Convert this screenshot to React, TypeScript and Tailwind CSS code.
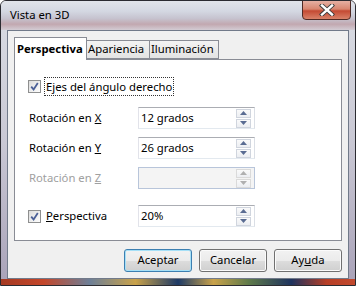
import { ReactNode } from 'react';

const font = { fontFamily: '"Noto Sans", "Open Sans", sans-serif' };

function Checkbox() {
  return (
    <span className="w-[13px] h-[13px] border border-[#8e8f8f] bg-[linear-gradient(135deg,#dcdcdc,#fdfdfd)] flex items-center justify-center shrink-0">
      <svg width="9" height="9" viewBox="0 0 9 9">
        <path d="M1.2 4.6 L3.6 7.4 L7.8 1" fill="none" stroke="#4a5f97" strokeWidth="1.8" />
      </svg>
    </span>
  );
}

function Spin({ value, disabled }: { value?: string; disabled?: boolean }) {
  const arrow = disabled ? '#b0b0b0' : '#5a6c92';
  return (
    <div
      className={`w-[117px] h-[22px] flex items-center border ${
        disabled ? 'border-[#b8c5da] bg-[#f4f4f4]' : 'border-[#abadb3] border-l-[#e2e3ea] border-r-[#dbdfe6] border-b-[#e3e9ef] bg-white'
      }`}
    >
      <span className="flex-1 pl-[2px] text-[11.3px] text-black leading-none">{value}</span>
      <div className="w-[15px] h-[19px] mr-[3px] flex flex-col gap-px">
        {['up', 'down'].map((d) => (
          <div
            key={d}
            className={`flex-1 border ${disabled ? 'border-[#dadada]' : 'border-[#d0d5de]'} bg-[linear-gradient(180deg,#fafafa,#eceef2)] flex items-center justify-center`}
          >
            <svg width="7" height="4" viewBox="0 0 7 4">
              <path d={d === 'up' ? 'M0 4 L3.5 0 L7 4 Z' : 'M0 0 L3.5 4 L7 0 Z'} fill={arrow} />
            </svg>
          </div>
        ))}
      </div>
    </div>
  );
}

function Row({ label, children, mt }: { label: ReactNode; children: ReactNode; mt: string }) {
  return (
    <div className={`flex items-center h-[22px] ${mt}`}>
      <div className="w-[111px] flex items-center">{label}</div>
      <div className="-ml-px">{children}</div>
    </div>
  );
}

function Button({ children, primary }: { children: ReactNode; primary?: boolean }) {
  return (
    <button
      className={`w-[68px] h-[23px] rounded-[3px] border text-[11.3px] text-black ${
        primary
          ? 'border-[#3c7fb1] shadow-[inset_0_0_0_1px_#a6e0f7]'
          : 'border-[#707070] shadow-[inset_0_0_0_1px_#fbfbfb]'
      } bg-[linear-gradient(180deg,#f2f2f2_0%,#ebebeb_50%,#dddddd_51%,#cfcfcf_100%)]`}
    >
      {children}
    </button>
  );
}

export default function App() {
  return (
    <div
      className="w-[356px] h-[286px] rounded-t-[6px] border border-[#2b2b31] flex flex-col overflow-hidden bg-[linear-gradient(180deg,#dadde4_0%,#c9c8d4_50%,#a9a2b8_100%)]"
      style={font}
    >
      {/* title bar */}
      <div className="h-[29px] shrink-0 flex items-start justify-between bg-[linear-gradient(180deg,#e1e4ea_0%,#d4d8e2_35%,#c6c3cf_60%,#c2a8b0_80%,#d3ccd4_100%)]">
        <span className="pl-[9px] pt-[6px] text-[11.3px] text-black">Vista en 3D</span>
        <div className="-mt-px mr-[4px] w-[49px] h-[20px] rounded-b-[4px] border border-[#4f2a24] bg-[linear-gradient(180deg,#e6b0a3_0%,#d88670_45%,#c44a33_55%,#d98269_100%)] flex items-center justify-center">
          <svg width="16" height="12" viewBox="0 0 16 12">
            <path d="M3 1.5 L13 10.5 M13 1.5 L3 10.5" stroke="#3b3b3b" strokeWidth="4.2" strokeLinecap="square" />
            <path d="M3 1.5 L13 10.5 M13 1.5 L3 10.5" stroke="#ffffff" strokeWidth="2.4" strokeLinecap="square" />
          </svg>
        </div>
      </div>

      {/* client area */}
      <div className="mx-[6px] flex-1 border border-[#717a8a] bg-[#f0f0f0] px-[6px] pt-[5px] pb-[6px] flex flex-col text-[11.3px] text-black">
        <div className="flex items-end h-[23px]">
          <div className="relative z-10 w-[73px] h-[23px] -mb-px border border-b-0 border-[#898c95] bg-white flex items-center pl-[2px] font-bold">
            Perspectiva
          </div>
          <div className="w-[63px] h-[19px] border border-l-0 border-[#898c95] bg-[linear-gradient(180deg,#f3f3f3,#e3e3e3)] flex items-center pl-[1px]">
            Apariencia
          </div>
          <div className="w-[69px] h-[19px] border border-l-0 border-[#898c95] bg-[linear-gradient(180deg,#f3f3f3,#e3e3e3)] flex items-center pl-[1px]">
            Iluminación
          </div>
        </div>

        <div className="h-[182px] border border-[#898c95] bg-white pl-[13px] pt-[15px] flex flex-col">
          <div className="flex items-center h-[22px] gap-[3px]">
            <Checkbox />
            <span className="border border-dotted border-[#333] px-px leading-[17px]">
              Ejes del ángulo derecho
            </span>
          </div>
          <Row mt="mt-[10px]" label={<span className="pl-px">Rotación en <u>X</u></span>}>
            <Spin value="12 grados" />
          </Row>
          <Row mt="mt-[8px]" label={<span className="pl-px">Rotación en <u>Y</u></span>}>
            <Spin value="26 grados" />
          </Row>
          <Row mt="mt-[8px]" label={<span className="pl-px text-[#a0a0a0]">Rotación en <u>Z</u></span>}>
            <Spin disabled />
          </Row>
          <Row
            mt="mt-[16px]"
            label={
              <span className="flex items-center gap-[5px]">
                <Checkbox />
                <span>
                  <u>P</u>erspectiva
                </span>
              </span>
            }
          >
            <Spin value="20%" />
          </Row>
        </div>

        <div className="flex justify-end gap-[7px] mt-[8px]">
          <Button primary>Aceptar</Button>
          <Button>Cancelar</Button>
          <Button>
            Ay<u>u</u>da
          </Button>
        </div>
      </div>

      {/* bottom frame */}
      <div className="h-[7px] shrink-0 bg-[linear-gradient(90deg,#a53a22_0%,#c4462a_12%,#6d7f97_25%,#c9a24a_38%,#1d3a66_50%,#c9a24a_60%,#5f7a4a_70%,#1e335e_82%,#b73e26_92%,#c24a2e_100%)]" />
    </div>
  );
}
